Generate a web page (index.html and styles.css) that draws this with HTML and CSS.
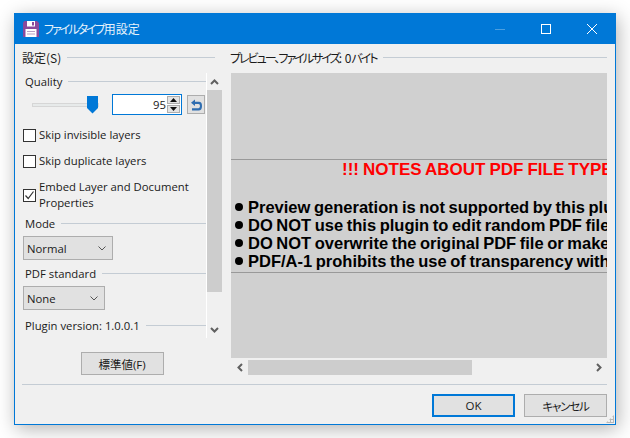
FILE: index.html
```html
<!DOCTYPE html>
<html lang="ja">
<head>
    <meta charset="UTF-8">
    <title>ファイルタイプ用設定</title>
    <link rel="stylesheet" href="styles.css">
</head>
<body>
    <div class="window">
        <div class="titlebar">
            <svg class="app-icon" width="16" height="16" viewBox="0 0 16 16">
                <path d="M0 1.500 1.500 0H14l2 2v14H0z" fill="#8a4a9c"/>
                <rect x="4" y="0" width="8" height="5.500" fill="#fff"/>
                <rect x="9" y="1" width="2" height="3.500" fill="#8a4a9c"/>
                <rect x="2.500" y="8" width="11" height="8" fill="#fff"/>
                <rect x="4" y="10" width="8" height="1" fill="#b9a0c4"/>
                <rect x="4" y="12.500" width="8" height="1" fill="#b9a0c4"/>
            </svg>
            <span class="title"><span class="kana">ファイルタイプ</span>用設定</span>
            <div class="caption-btns">
                <span class="cap-btn"><svg width="10" height="10" viewBox="0 0 10 10"><rect x="0" y="5" width="10" height="1" fill="#4c9fe0"/></svg></span>
                <span class="cap-btn"><svg width="10" height="10" viewBox="0 0 10 10"><rect x="0.500" y="0.500" width="9" height="9" fill="none" stroke="#fff"/></svg></span>
                <span class="cap-btn"><svg width="10" height="10" viewBox="0 0 10 10"><path d="M0 0 10 10M10 0 0 10" stroke="#fff" stroke-width="1"/></svg></span>
            </div>
        </div>

        <div class="content">
            <div class="columns">
                <div class="left">
                    <div class="legend top-legend"><span>設定(S)</span><i></i></div>
                    <div class="settings">
                        <div class="settings-inner">
                            <div class="legend legend-quality"><span>Quality</span><i></i></div>
                            <div class="quality-row">
                                <div class="slider"><div class="slider-track"></div><div class="slider-thumb"></div></div>
                                <div class="spin-input">
                                    <span class="spin-value">95</span>
                                    <div class="spin-btns">
                                        <span class="spin-btn"><svg width="7" height="4" viewBox="0 0 7 4"><path d="M3.500 0 7 4H0z" fill="#111"/></svg></span>
                                        <span class="spin-btn"><svg width="7" height="4" viewBox="0 0 7 4"><path d="M0 0H7L3.500 4z" fill="#111"/></svg></span>
                                    </div>
                                </div>
                                <button class="reset-btn">
                                    <svg width="12" height="12" viewBox="0 0 12 12"><path d="M5 .5 1 3.800 5 7V5H8.500Q10 5 10 7T8.500 9.300H2V11.500H8.500Q12 11.500 12 7T8.500 2.800H5z" fill="#2f6db0"/></svg>
                                </button>
                            </div>
                            <label class="check check-first"><span class="box"></span><span>Skip invisible layers</span></label>
                            <label class="check check-second"><span class="box"></span><span>Skip duplicate layers</span></label>
                            <label class="check check-third">
                                <span class="box"><svg width="11" height="11" viewBox="0 0 11 11"><path d="M1.500 5.500 4.200 8.500 9.500 1.500" fill="none" stroke="#333" stroke-width="1.200"/></svg></span>
                                <span>Embed Layer and Document Properties</span>
                            </label>
                            <div class="legend legend-mode"><span>Mode</span><i></i></div>
                            <div class="select select-mode"><span>Normal</span><svg width="8" height="5" viewBox="0 0 8 5"><path d="M.5.5 4 4 7.500.5" fill="none" stroke="#555"/></svg></div>
                            <div class="legend legend-pdf"><span>PDF standard</span><i></i></div>
                            <div class="select select-pdf"><span>None</span><svg width="8" height="5" viewBox="0 0 8 5"><path d="M.5.5 4 4 7.500.5" fill="none" stroke="#555"/></svg></div>
                            <div class="legend legend-plugin"><span>Plugin version: 1.0.0.1</span><i></i></div>
                        </div>
                        <div class="vscroll">
                            <span class="arrow"><svg width="9" height="6" viewBox="0 0 9 6"><path d="M1 5 4.500 1.500 8 5" fill="none" stroke="#606060" stroke-width="2"/></svg></span>
                            <div class="vscroll-track"><div class="vscroll-thumb"></div></div>
                            <span class="arrow"><svg width="9" height="6" viewBox="0 0 9 6"><path d="M1 1 4.500 4.500 8 1" fill="none" stroke="#606060" stroke-width="2"/></svg></span>
                        </div>
                    </div>
                    <div class="defaults-row"><button class="btn btn-defaults">標準値(F)</button></div>
                </div>

                <div class="right">
                    <div class="legend top-legend preview-legend"><span><span class="kana">プレビュー、ファイルサイズ</span>: 0<span class="kana">バイト</span></span><i></i></div>
                    <div class="preview">
                        <div class="preview-page">
                            <div class="notes-title">!!! NOTES ABOUT PDF FILE TYPE</div>
                            <ul class="notes">
                                <li>Preview generation is not supported by this plu</li>
                                <li>DO NOT use this plugin to edit random PDF file</li>
                                <li>DO NOT overwrite the original PDF file or make</li>
                                <li>PDF/A-1 prohibits the use of transparency with</li>
                            </ul>
                        </div>
                    </div>
                    <div class="hscroll">
                        <span class="arrow"><svg width="6" height="9" viewBox="0 0 6 9"><path d="M5 1 1.500 4.500 5 8" fill="none" stroke="#606060" stroke-width="2"/></svg></span>
                        <div class="hscroll-track"><div class="hscroll-thumb"></div></div>
                        <span class="arrow"><svg width="6" height="9" viewBox="0 0 6 9"><path d="M1 1 4.500 4.500 1 8" fill="none" stroke="#606060" stroke-width="2"/></svg></span>
                    </div>
                </div>
            </div>
            <div class="footer">
                <button class="btn btn-ok">OK</button>
                <button class="btn btn-cancel">キャンセル</button>
            </div>
        </div>
        <div class="grip"></div>
    </div>
</body>
</html>
```

FILE: styles.css
```css
* {
    margin: 0;
    padding: 0;
    box-sizing: border-box;
}

body {
    width: 630px;
    height: 438px;
    padding: 13px 14px;
    overflow: hidden;
    background: #fff;
    font-family: "Open Sans", "Noto Sans CJK JP", sans-serif;
    font-size: 11.3px;
    font-feature-settings: "palt";
    color: #1a1a1a;
}

.window {
    position: relative;
    width: 602px;
    height: 412px;
    background: #f0f0f0;
    border: 1px solid #0078d7;
    border-top: 0;
    box-shadow: 2px 4px 18px rgba(0, 0, 0, 0.3);
}

.titlebar {
    display: flex;
    align-items: center;
    height: 31px;
    margin: 0 -1px;
    padding-left: 9px;
    background: #0078d7;
    color: #fff;
}

.app-icon {
    flex: none;
}

.title {
    margin-left: 5px;
    font-family: "Noto Sans CJK JP", sans-serif;
    font-size: 12px;
    color: #e6f2fb;
}

.kana {
    letter-spacing: -2px;
}

.caption-btns {
    display: flex;
    margin-left: auto;
    margin-right: 1px;
}

.cap-btn {
    display: flex;
    align-items: center;
    justify-content: center;
    width: 46px;
    height: 31px;
}

.content {
    padding: 0 8px 0 7px;
}

.columns {
    display: flex;
    height: 340px;
}

.legend {
    display: flex;
    align-items: center;
    white-space: nowrap;
}

.legend i {
    flex: 1;
    height: 1px;
    margin-left: 6px;
    background: #c4ccd4;
}

.top-legend {
    height: 27px;
    font-family: "Noto Sans CJK JP", sans-serif;
    font-size: 12px;
}

.preview-legend {
    padding-left: 1px;
}

.left {
    width: 200px;
}

.left .top-legend i {
    margin-right: 7px;
}

.settings {
    display: flex;
    height: 265px;
    margin-top: 2px;
}

.settings-inner {
    width: 184px;
    padding-left: 1px;
}

.settings .legend {
    padding-left: 2px;
}

.legend-quality {
    height: 16px;
}

.quality-row {
    display: flex;
    align-items: center;
    height: 23px;
    margin-top: 4px;
}

.slider {
    position: relative;
    flex: none;
    width: 80px;
    height: 20px;
    margin-left: 9px;
}

.slider-track {
    position: absolute;
    top: 8px;
    left: 0;
    width: 67px;
    height: 4px;
    background: #e7eaea;
    border: 1px solid #d6d6d6;
}

.slider-thumb {
    position: absolute;
    top: 1px;
    left: 55px;
    width: 11px;
    height: 18px;
    background: #0078d7;
    clip-path: polygon(0 0, 100% 0, 100% 70%, 50% 100%, 0 70%);
}

.spin-input {
    display: flex;
    flex: none;
    align-items: center;
    justify-content: flex-end;
    width: 70px;
    height: 21px;
    background: #fff;
    border: 1px solid #0078d7;
}

.spin-value {
    margin-right: 1px;
}

.spin-btns {
    display: flex;
    flex-direction: column;
    gap: 1px;
    margin-right: 1px;
}

.spin-btn {
    display: flex;
    align-items: center;
    justify-content: center;
    width: 13px;
    height: 8px;
    background: #e4e4e4;
    border: 1px solid #adadad;
}

.reset-btn {
    display: flex;
    flex: none;
    align-items: center;
    justify-content: center;
    width: 18px;
    height: 19px;
    margin-left: 5px;
    background: #e1e1e1;
    border: 1px solid #adadad;
}

.check {
    display: flex;
    align-items: center;
    line-height: 16px;
}

.box {
    display: flex;
    flex: none;
    align-items: center;
    justify-content: center;
    width: 13px;
    height: 13px;
    margin-right: 3px;
    background: #fff;
    border: 1px solid #333;
}

.check-first {
    margin-top: 11px;
}

.check-second {
    margin-top: 10px;
}

.check-third {
    margin-top: 10px;
}

.legend-mode {
    margin-top: 3px;
    height: 18px;
}

.select {
    display: flex;
    align-items: center;
    justify-content: space-between;
    height: 24px;
    margin-top: 4px;
    padding: 0 6px 0 3px;
    background: #e1e1e1;
    border: 1px solid #adadad;
}

.select-mode {
    width: 90px;
}

.select-pdf {
    width: 82px;
}

.legend-pdf {
    margin-top: 4px;
    height: 18px;
}

.legend-plugin {
    margin-top: 6px;
    height: 18px;
}

.vscroll {
    display: flex;
    flex-direction: column;
    width: 16px;
    border-left: 1px solid #fff;
}

.vscroll .arrow {
    display: flex;
    align-items: center;
    justify-content: center;
    height: 17px;
}

.vscroll-track {
    flex: 1;
}

.vscroll-thumb {
    width: 15px;
    height: 202px;
    background: #cdcdcd;
}

.defaults-row {
    display: flex;
    justify-content: center;
    margin-top: 14px;
}

.btn {
    width: 83px;
    height: 23px;
    background: #e1e1e1;
    border: 1px solid #adadad;
    font-family: "Open Sans", "Noto Sans CJK JP", sans-serif;
    font-size: 11.5px;
    font-feature-settings: "palt";
    color: #1a1a1a;
}

.btn-cancel {
    letter-spacing: -1.2px;
}

.right {
    width: 379px;
    margin-left: 7px;
}

.preview {
    width: 376px;
    height: 285px;
    margin-top: 2px;
    margin-left: 2px;
    overflow: hidden;
    background: #d0d0d0;
}

.preview-page {
    width: 376px;
    height: 114px;
    margin-top: 86px;
    padding-left: 4px;
    overflow: hidden;
    white-space: nowrap;
    border-top: 1px solid #999;
    border-bottom: 1px solid #999;
    font-family: "Liberation Sans", sans-serif;
    font-weight: bold;
    font-size: 16px;
    color: #000;
}

.notes-title {
    height: 38px;
    padding-left: 107px;
    line-height: 19px;
    word-spacing: -0.7px;
    color: #f00;
    font-size: 17px;
}

.notes {
    list-style: none;
}

.notes li {
    position: relative;
    padding-left: 13px;
    line-height: 18px;
    word-spacing: -1px;
    font-size: 16.5px;
}

.notes li::before {
    content: "";
    position: absolute;
    top: 5px;
    left: 0;
    width: 8px;
    height: 8px;
    border-radius: 50%;
    background: #000;
}

.hscroll {
    display: flex;
    align-items: center;
    width: 376px;
    height: 16px;
    margin-top: 1px;
    margin-left: 2px;
}

.hscroll .arrow {
    display: flex;
    flex: none;
    align-items: center;
    justify-content: center;
    width: 17px;
    height: 16px;
}

.hscroll-track {
    flex: 1;
}

.hscroll-thumb {
    width: 224px;
    height: 15px;
    background: #cdcdcd;
}

.footer {
    display: flex;
    justify-content: flex-end;
    gap: 9px;
    padding-top: 9px;
    border-top: 1px solid #c4ccd4;
}

.btn-ok {
    border: 2px solid #0078d7;
}

.grip {
    position: absolute;
    right: 1px;
    bottom: 1px;
    width: 8px;
    height: 8px;
    background: radial-gradient(circle, #b8b8b8 1px, transparent 1.2px) 0 0 / 3px 3px;
    clip-path: polygon(100% 0, 100% 100%, 0 100%);
}
```
